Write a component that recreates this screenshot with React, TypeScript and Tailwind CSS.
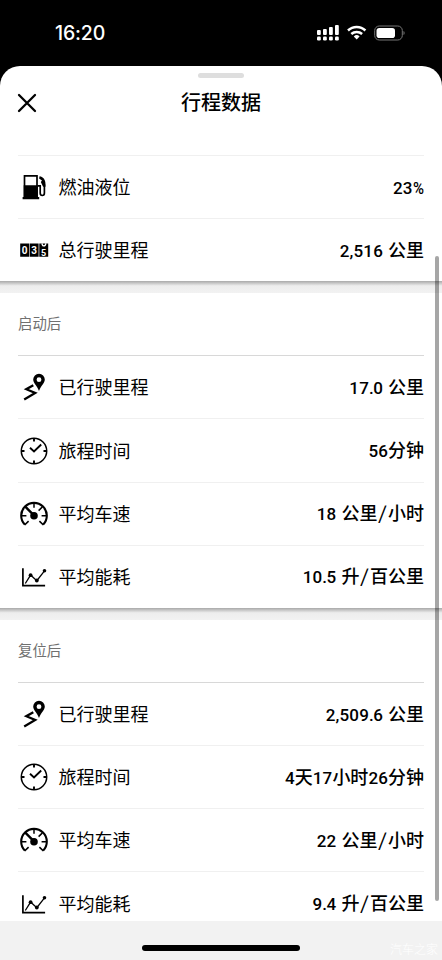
import type { ReactNode } from "react";

type IconProps = { className?: string };

type Row = {
  label: string;
  value: string;
  icon: (props: IconProps) => ReactNode;
};

const FuelIcon = ({ className }: IconProps) => (
  <svg viewBox="0 0 30 30" className={className} fill="none" stroke="#000">
    <path d="M5.5 26V3.800h12.500V26" strokeWidth="1.700" />
    <path d="M4.700 13.200h14.200v11.800H20.200v2.200H3.600v-2.200h1.100z" fill="#000" stroke="none" />
    <path d="M19 13.800h2.200v7.300c0 3.200 4.200 3.200 4.200 0v-8.700" strokeWidth="1.700" />
    <path d="M20.600 4.300c3.200.6 6 3 5.900 8v2.500h-2.400l-2.300-4.800 1.200-1.500-2.900-2.100z" fill="#000" stroke="none" />
  </svg>
);

const OdometerIcon = ({ className }: IconProps) => (
  <svg viewBox="0 0 30 30" className={className}>
    <path d="M1.200 8.500h8.900v13.300H1.200zM10.700 8.500h8.900v13.300h-8.900zM20.300 8.500h8.900v13.300h-8.900z" fill="#000" />
    <g fill="#fff" fontFamily="Roboto, sans-serif" fontWeight="700" fontSize="10" textAnchor="middle">
      <text x="5.600" y="18.700">0</text>
      <text x="15.100" y="18.700">3</text>
      <text x="24.700" y="21.400" fontSize="9">5</text>
    </g>
    <path d="M23 8.400c.2 3.300 3.600 3.300 3.800 0" stroke="#fff" strokeWidth="1.300" fill="none" />
  </svg>
);

const RouteIcon = ({ className }: IconProps) => (
  <svg viewBox="0 0 30 30" className={className}>
    <path
      fillRule="evenodd"
      d="M20 1.800a5.800 5.800 0 0 0-5.800 5.800c0 3.600 3.600 5.600 5.800 11.500 2.200-5.900 5.800-7.900 5.800-11.500A5.800 5.800 0 0 0 20 1.800zm0 3.500a2.400 2.400 0 1 1 0 4.800 2.400 2.400 0 0 1 0-4.800z"
    />
    <path d="M14.300 13.200L7.300 17.200l8.900 3.800L5.200 27.500" fill="none" stroke="#000" strokeWidth="2.300" />
  </svg>
);

const ClockIcon = ({ className }: IconProps) => (
  <svg viewBox="0 0 30 30" className={className} fill="none" stroke="#000">
    <circle cx="15" cy="15" r="12.700" strokeWidth="1.500" />
    <path d="M15 2.500v3M15 24.500v3M2.500 15h3M24.500 15h3" strokeWidth="1.900" />
    <path d="M11 11.800l4 3.600 7.200-6.900" strokeWidth="1.900" />
  </svg>
);

const GaugeIcon = ({ className }: IconProps) => (
  <svg viewBox="0 0 30 30" className={className} fill="none" stroke="#000">
    <path d="M5.800 25.600A12.800 12.800 0 1 1 24.200 25.600" strokeWidth="2.100" />
    <path d="M5.600 26l4-3.900M24.400 26l-4-3.900" strokeWidth="1.600" />
    <path d="M15 3.700v5M2.500 16.700h4.900M22.600 16.700h4.900M19.600 11.600l3.800-3.700" strokeWidth="1.500" />
    <path d="M6.300 7.700L14 15.400" strokeWidth="2.400" />
    <circle cx="15" cy="16.700" r="3.800" fill="#000" stroke="none" />
  </svg>
);

const ChartIcon = ({ className }: IconProps) => (
  <svg viewBox="0 0 30 30" className={className} fill="none" stroke="#000">
    <path d="M3.900 6.200v17.500h22.200" strokeWidth="1.700" />
    <path d="M6.300 21.500l5.300-8.400 6.200 5.600 7.700-9.900" strokeWidth="1.300" />
    <g fill="#000" stroke="none">
      <circle cx="11.600" cy="13.200" r="1.900" />
      <circle cx="17.800" cy="18.500" r="1.900" />
      <circle cx="25.500" cy="8.800" r="1.800" />
    </g>
  </svg>
);

const STATUS_ROWS: Row[] = [
  { label: "燃油液位", value: "23%", icon: FuelIcon },
  { label: "总行驶里程", value: "2,516 公里", icon: OdometerIcon },
];

const START_ROWS: Row[] = [
  { label: "已行驶里程", value: "17.0 公里", icon: RouteIcon },
  { label: "旅程时间", value: "56分钟", icon: ClockIcon },
  { label: "平均车速", value: "18 公里/小时", icon: GaugeIcon },
  { label: "平均能耗", value: "10.5 升/百公里", icon: ChartIcon },
];

const RESET_ROWS: Row[] = [
  { label: "已行驶里程", value: "2,509.6 公里", icon: RouteIcon },
  { label: "旅程时间", value: "4天17小时26分钟", icon: ClockIcon },
  { label: "平均车速", value: "22 公里/小时", icon: GaugeIcon },
  { label: "平均能耗", value: "9.4 升/百公里", icon: ChartIcon },
];

// Digits and units use different faces, so the value is drawn run by run
const Value = ({ text }: { text: string }) => (
  <span className="ml-auto whitespace-pre pb-px text-[18px] font-medium leading-6">
    {(text.match(/[\d,]+|[.%/ ]|[^\d.,%/ ]+/g) ?? []).map((run, i) => {
      if (run === "/") return <span key={i} className="inline-block w-[10.600px] scale-x-125 text-center font-normal">/</span>;
      if (run === " ") return <span key={i} className="inline-block w-[5px]"> </span>;
      if (run === ".") return <span key={i} className="font-['Roboto'] text-[17px] tracking-[-0.500px]">.</span>;
      if (run === "%") return <span key={i} className="inline-block w-[11.400px] origin-left scale-x-[0.88] font-['Roboto'] text-[17px]">%</span>;
      if (/\d/.test(run)) return <span key={i} className="font-['Roboto'] text-[17px] tracking-[0.150px]">{run}</span>;
      return <span key={i}>{run}</span>;
    })}
  </span>
);

const DataRow = ({ label, value, icon: Icon }: Row) => (
  <div className="flex h-[63.200px] shrink-0 items-center border-t border-[#f0f0f0]">
    <Icon className="mr-[10px] ml-[0.500px] size-[30px] shrink-0" />
    <span className="pb-[2px] text-[18px] leading-6">{label}</span>
    <Value text={value} />
  </div>
);

const Section = ({ title, rows }: { title: string; rows: Row[] }) => (
  <section className="shrink-0 bg-white px-[18px]">
    <h2 className="flex h-[62.400px] items-center pb-[2px] text-[14.400px] font-normal text-[#707070]">{title}</h2>
    <div className="*:first:border-[#d8d8d8]">
      {rows.map(row => <DataRow key={row.label} {...row} />)}
    </div>
  </section>
);

const Divider = () => (
  <div className="h-[11.500px] shrink-0 bg-linear-to-b from-[#a9a9a9] via-[#ededed] via-40% to-[#f2f2f2]" />
);

const StatusBar = () => (
  <div className="flex h-[66px] shrink-0 items-center pr-[37px] pl-[55px] text-white">
    <span className="pb-px font-['Inter'] text-[19.500px] leading-6 font-medium tracking-[-0.150px]">16:20</span>
    <svg viewBox="0 0 88 18" className="ml-auto h-[18px] w-[88px]" fill="#fff">
      <rect x="0" y="6" width="3.800" height="5" rx="1" />
      <rect x="6" y="5" width="3.800" height="6" rx="1" />
      <rect x="12" y="3" width="3.800" height="8" rx="1" />
      <rect x="18" y="1" width="3.800" height="10" rx="1" />
      <rect x="0" y="12.500" width="3.800" height="4" rx="1.200" />
      <rect x="6" y="12.500" width="3.800" height="4" rx="1.200" />
      <rect x="12" y="12.500" width="3.800" height="4" rx="1.200" />
      <rect x="18" y="12.500" width="3.800" height="4" rx="1.200" />
      <g fill="none" stroke="#fff" strokeWidth="2.500">
        <path d="M31 6.500a12.600 12.600 0 0 1 17.400 0" />
        <path d="M34.300 10a8 8 0 0 1 10.800 0" />
      </g>
      <path d="M36.800 12.400a4.300 4.300 0 0 1 5.800 0l-2.900 3.100z" />
      <rect x="57.700" y="2" width="27.600" height="14" rx="4.500" fill="none" stroke="#777" />
      <rect x="59.500" y="4" width="18.500" height="10" rx="2.800" />
      <path d="M86.500 7v4c1.500-.7 1.500-3.300 0-4z" fill="#777" />
    </svg>
  </div>
);

const App = () => (
  <div className="relative flex h-[960px] w-[442px] flex-col overflow-hidden bg-black font-['Noto_Sans_CJK_SC',sans-serif] text-black">
    <StatusBar />

    <main className="flex min-h-0 flex-1 flex-col overflow-hidden rounded-t-[20px] bg-white">
      <header className="relative grid h-[89px] shrink-0 grid-cols-[1fr_auto_1fr] px-[18px] pt-[24px]">
        <span className="absolute top-[7px] left-[198px] h-[5px] w-[46px] rounded-full bg-[#dedede]" />
        <svg viewBox="0 0 18 18" className="mt-[4px] size-[18px] overflow-visible" stroke="#000" strokeWidth="2.300" strokeLinecap="round">
          <path d="M1 1l16 16M17 1L1 17" />
        </svg>
        <h1 className="text-[20px] leading-6 font-medium">行程数据</h1>
      </header>

      {/* Scrolled content, cut off by the footer */}
      <div className="flex min-h-0 flex-1 flex-col overflow-hidden">
        <div className="shrink-0 px-[18px]">
          {STATUS_ROWS.map(row => <DataRow key={row.label} {...row} />)}
        </div>
        <Divider />
        <Section title="启动后" rows={START_ROWS} />
        <Divider />
        <Section title="复位后" rows={RESET_ROWS} />
      </div>

      <footer className="relative h-[39px] shrink-0 bg-[#f2f2f2]">
        <div className="mx-auto mt-[24px] h-[6px] w-[158px] rounded-full bg-black" />
        <span className="absolute right-[4px] bottom-[3px] text-[12px] leading-4 font-light text-white">汽车之家</span>
      </footer>
    </main>

    {/* Scroll indicator */}
    <div className="absolute top-[256px] right-[3px] h-[645px] w-[4px] rounded-full bg-black/35" />
  </div>
);

export default App;
